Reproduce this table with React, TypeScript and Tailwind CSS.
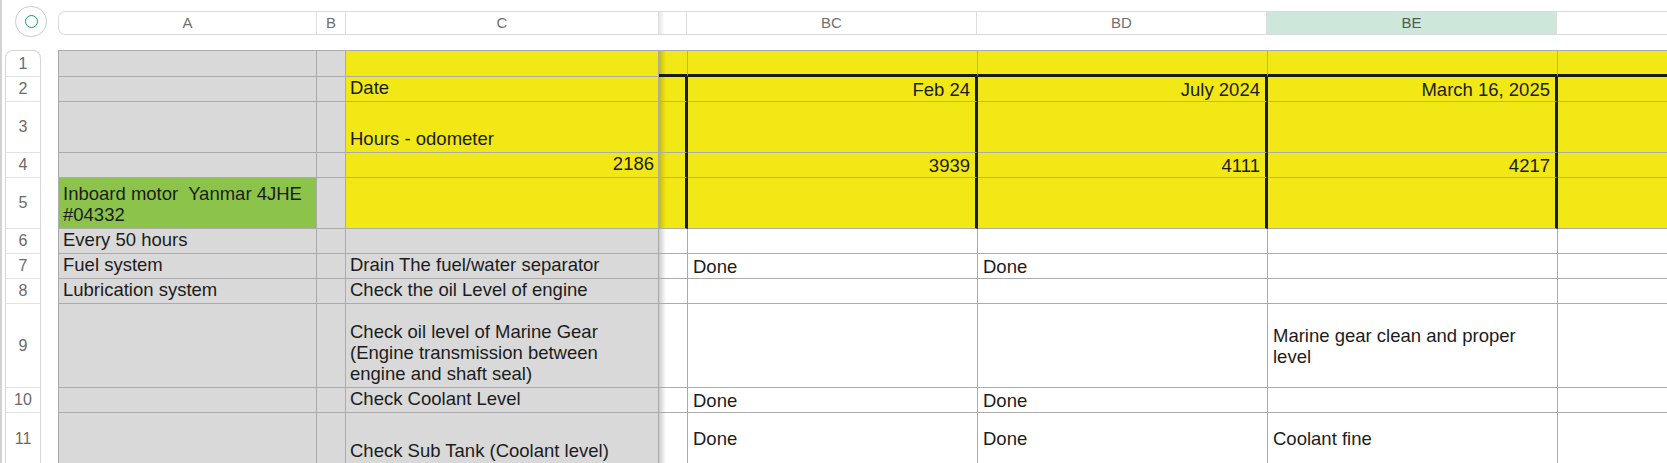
import * as React from "react";
import clsx from "clsx";

// ─────────────────────────────────────────────
// Sheet data
// ─────────────────────────────────────────────
type Bg = "g" | "y" | "gr" | "w";

interface CellSpec {
  t?: React.ReactNode;
  bg: Bg;
  right?: boolean; // right aligned text
  tr?: boolean; // thick right border
  tb?: boolean; // thick bottom border
}

const BG: Record<Bg, string> = {
  g: "bg-[#d9d9d9]",
  y: "bg-[#f2e815]",
  gr: "bg-[#8cc34b]",
  w: "bg-white",
};

const ROW_HEIGHTS = [26, 25, 51, 25, 51, 25, 25, 25, 84, 25, 52];

const HEADERS = [
  { label: "A", w: "w-[258px]" },
  { label: "B", w: "w-[29px]" },
  { label: "C", w: "w-[313px]" },
  { label: "", w: "w-[28px]", gap: true },
  { label: "BC", w: "w-[290px]" },
  { label: "BD", w: "w-[290px]" },
  { label: "BE", w: "w-[290px]", active: true },
  { label: "", w: "w-[290px]" },
];

const ROWS: CellSpec[][] = [
  [
    { bg: "g" }, { bg: "g" }, { bg: "y" },
    { bg: "y", tb: true }, { bg: "y", tb: true }, { bg: "y", tb: true }, { bg: "y", tb: true }, { bg: "y", tb: true },
  ],
  [
    { bg: "g" }, { bg: "g" }, { bg: "y", t: "Date" },
    { bg: "y", tr: true },
    { bg: "y", tr: true, right: true, t: "Feb 24" },
    { bg: "y", tr: true, right: true, t: "July 2024" },
    { bg: "y", tr: true, right: true, t: "March 16, 2025" },
    { bg: "y" },
  ],
  [
    { bg: "g" }, { bg: "g" }, { bg: "y", t: "Hours - odometer" },
    { bg: "y", tr: true }, { bg: "y", tr: true }, { bg: "y", tr: true }, { bg: "y", tr: true }, { bg: "y" },
  ],
  [
    { bg: "g" }, { bg: "g" }, { bg: "y", right: true, t: "2186" },
    { bg: "y", tr: true },
    { bg: "y", tr: true, right: true, t: "3939" },
    { bg: "y", tr: true, right: true, t: "4111" },
    { bg: "y", tr: true, right: true, t: "4217" },
    { bg: "y" },
  ],
  [
    { bg: "gr", t: <>Inboard motor{"\u00a0 "}Yanmar 4JHE<br />#04332</> },
    { bg: "g" }, { bg: "y" },
    { bg: "y", tr: true }, { bg: "y", tr: true }, { bg: "y", tr: true }, { bg: "y", tr: true }, { bg: "y" },
  ],
  [
    { bg: "g", t: "Every 50 hours" }, { bg: "g" }, { bg: "g" },
    { bg: "w" }, { bg: "w" }, { bg: "w" }, { bg: "w" }, { bg: "w" },
  ],
  [
    { bg: "g", t: "Fuel system" }, { bg: "g" }, { bg: "g", t: "Drain The fuel/water separator" },
    { bg: "w" }, { bg: "w", t: "Done" }, { bg: "w", t: "Done" }, { bg: "w" }, { bg: "w" },
  ],
  [
    { bg: "g", t: "Lubrication system" }, { bg: "g" }, { bg: "g", t: "Check the oil Level of engine" },
    { bg: "w" }, { bg: "w" }, { bg: "w" }, { bg: "w" }, { bg: "w" },
  ],
  [
    { bg: "g" }, { bg: "g" },
    { bg: "g", t: <>Check oil level of Marine Gear<br />(Engine transmission between<br />engine and shaft seal)</> },
    { bg: "w" }, { bg: "w" }, { bg: "w" },
    { bg: "w", t: <>Marine gear clean and proper<br />level</> },
    { bg: "w" },
  ],
  [
    { bg: "g" }, { bg: "g" }, { bg: "g", t: "Check Coolant Level" },
    { bg: "w" }, { bg: "w", t: "Done" }, { bg: "w", t: "Done" }, { bg: "w" }, { bg: "w" },
  ],
  [
    { bg: "g" }, { bg: "g" }, { bg: "g", t: "Check Sub Tank (Coolant level)" },
    { bg: "w" }, { bg: "w", t: "Done" }, { bg: "w", t: "Done" }, { bg: "w", t: "Coolant fine" }, { bg: "w" },
  ],
];

// ─────────────────────────────────────────────
// Pieces
// ─────────────────────────────────────────────
function Cell({ spec, col }: { spec: CellSpec; col: number }) {
  const isGap = col === 3;
  const centered = col >= 4; // date columns are middle aligned
  return (
    <div
      className={clsx(
        "flex overflow-hidden whitespace-nowrap",
        BG[spec.bg],
        spec.tb ? "border-b-[3px] border-b-[#1b1b1b]" : "border-b border-b-[#ababab]",
        spec.tr ? "border-r-[3px] border-r-[#1b1b1b]" : "border-r border-r-[#ababab]",
        isGap ? "items-stretch" : centered ? "items-center px-[5px]" : "items-end px-1 pb-[3px]",
        spec.right ? "justify-end text-right" : "justify-start text-left"
      )}
    >
      {isGap ? (
        <div className="w-[7px] bg-linear-to-r from-black/20 to-transparent" />
      ) : (
        spec.t && <span>{spec.t}</span>
      )}
    </div>
  );
}

function ColumnBar() {
  return (
    <div className="flex flex-1 h-[24px] mt-[11px] ml-[11px] border-y border-l border-[#dadada] rounded-l-[7px] overflow-hidden text-[15px] text-[#707070]">
      {HEADERS.map((h, i) => (
        <div
          key={i}
          className={clsx(
            "shrink-0 flex items-center justify-center border-r border-r-[#dedede]",
            h.w,
            h.active && "bg-[#cde7db] text-[#4f5a55]"
          )}
        >
          {h.gap ? <div className="self-stretch w-[6px] mr-auto bg-linear-to-r from-black/10 to-transparent" /> : h.label}
        </div>
      ))}
      <div className="flex-1" />
    </div>
  );
}

function RowNumbers() {
  return (
    <div className="shrink-0 ml-[3px] w-[36px] self-start border-t border-x border-[#d6d6d6] rounded-t-[8px] bg-white flex flex-col text-[16px] text-[#6a6a6a]">
      {ROW_HEIGHTS.map((h, i) => (
        <div
          key={i}
          className="flex items-center justify-center border-b border-[#e3e3e3]"
          style={{ height: h }}
        >
          {i + 1}
        </div>
      ))}
    </div>
  );
}

export default function App() {
  return (
    <div className="w-[1667px] h-[463px] overflow-hidden bg-white border-l-2 border-[#d2d2d2] flex flex-col font-['Liberation_Sans',Arial,sans-serif]">
      {/* top strip: status circle + column letters */}
      <div className="h-[50px] shrink-0 flex items-start">
        <div className="shrink-0 ml-[13px] mt-[6px] w-[32px] h-[31px] rounded-full border border-[#cfcfcf] bg-white flex items-center justify-center shadow-[0_0_1px_rgba(0,0,0,0.08)]">
          <div className="w-[13px] h-[13px] rounded-full border-[1.5px] border-[#1f9a5c]" />
        </div>
        <ColumnBar />
      </div>

      {/* sheet body */}
      <div className="flex items-start">
        <RowNumbers />
        <div className="ml-[17px] shrink-0 grid grid-cols-[258px_29px_313px_29px_290px_290px_290px_290px] grid-rows-[26px_25px_51px_25px_51px_25px_25px_25px_84px_25px_52px] border-t border-l border-[#ababab] text-[18.5px] leading-[21px] text-[#1c1c1c]">
          {ROWS.map((row, r) =>
            row.map((spec, c) => <Cell key={`${r}-${c}`} spec={spec} col={c} />)
          )}
        </div>
      </div>
    </div>
  );
}
